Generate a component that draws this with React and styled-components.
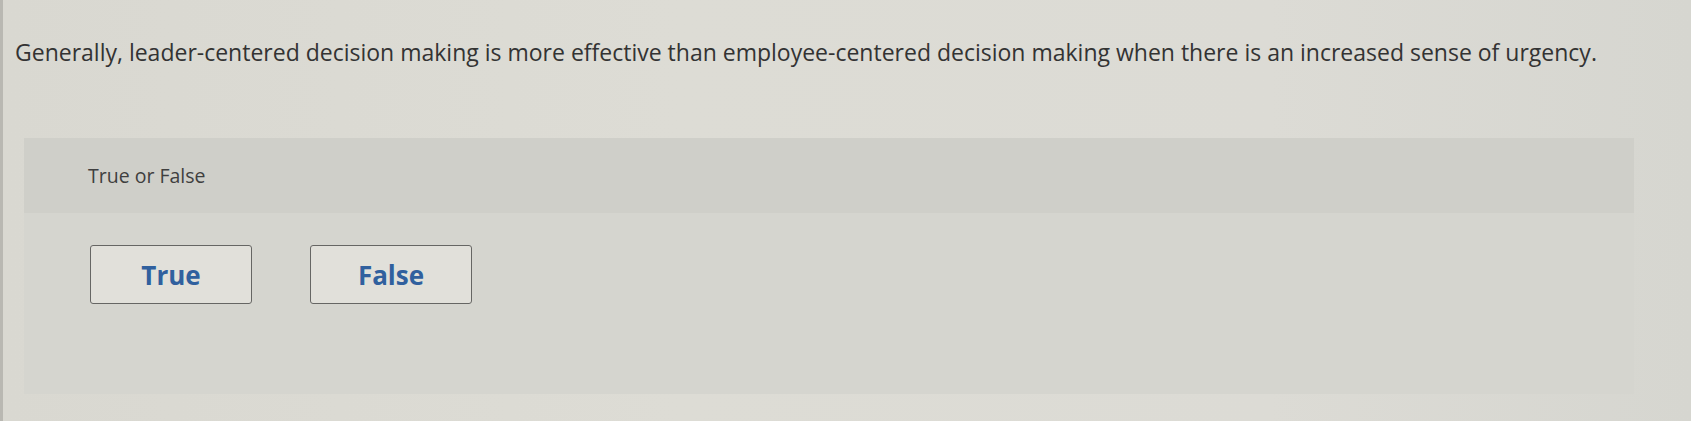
import React from "react";
import styled, { createGlobalStyle } from "styled-components";

const Global = createGlobalStyle`
  html, body {
    margin: 0;
    padding: 0;
    background: #dcdbd4;
  }
  body {
    width: 1691px;
    height: 421px;
    overflow: hidden;
    font-family: "Open Sans", "Liberation Sans", sans-serif;
  }
`;

const Page = styled.div`
  width: 1691px;
  height: 421px;
  box-sizing: border-box;
  padding: 36px 0 0 0;
  background: linear-gradient(90deg, #d9d8d1 0%, #dddcd5 40%, #dcdbd5 75%, #d6d6d0 100%);
  border-left: 3px solid #b9b8b2;
`;

const Question = styled.p`
  margin: 0 0 0 12px;
  font-size: 23px;
  line-height: 32px;
  color: #333333;
  white-space: nowrap;
  letter-spacing: 0;
`;

const Panel = styled.section`
  margin: 70px 0 0 21px;
  width: 1610px;
  height: 256px;
  display: flex;
  flex-direction: column;
  background: #d5d5cf;
`;

const PanelHeader = styled.div`
  height: 75px;
  display: flex;
  align-items: center;
  padding-left: 64px;
  background: #cfcfc9;
  font-size: 19.5px;
  color: #3f3f3f;
`;

const Options = styled.div`
  display: flex;
  gap: 58px;
  padding: 32px 0 0 66px;
`;

const Choice = styled.button`
  width: 162px;
  height: 59px;
  box-sizing: border-box;
  border: 1.5px solid #666664;
  border-radius: 3px;
  background: #e1e0da;
  color: #30609e;
  font-family: "Open Sans", "Liberation Sans", sans-serif;
  font-weight: 700;
  font-size: 26px;
  cursor: pointer;
  padding: 0;
`;

export default function App() {
  return (
    <>
      <Global />
      <Page>
        <Question>
          Generally, leader-centered decision making is more effective than employee-centered decision making when there is an increased sense of urgency.
        </Question>
        <Panel>
          <PanelHeader>True or False</PanelHeader>
          <Options>
            <Choice>True</Choice>
            <Choice>False</Choice>
          </Options>
        </Panel>
      </Page>
    </>
  );
}
